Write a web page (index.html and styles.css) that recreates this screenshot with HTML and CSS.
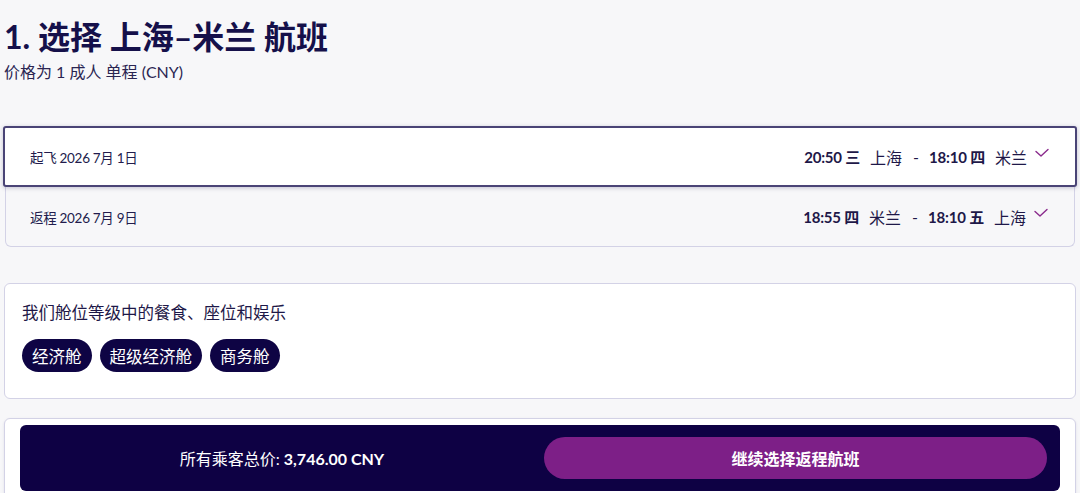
FILE: index.html
```html
<!DOCTYPE html>
<html lang="zh-CN">
<head>
<meta charset="utf-8">
<title>选择航班</title>
<link rel="stylesheet" href="styles.css">
</head>
<body>
<main class="page">
  <h1 class="title">1. 选择 上海–米兰 航班</h1>
  <p class="subtitle">价格为 1 成人 单程 (CNY)</p>

  <section class="legs">
    <div class="leg leg-active">
      <span class="leg-date">起飞 2026 7月 1日</span>
      <span class="leg-route">
        <b>20:50 三</b><span class="city">上海</span><span class="dash">-</span><b>18:10 四</b><span class="city">米兰</span>
        <svg class="check" width="14" height="10" viewBox="0 0 14 10"><path d="M1 3.5 L6 8 L13 1.5" fill="none" stroke="#8a2a8c" stroke-width="1.4" stroke-linecap="round" stroke-linejoin="round"/></svg>
      </span>
    </div>
    <div class="leg leg-return">
      <span class="leg-date">返程 2026 7月 9日</span>
      <span class="leg-route">
        <b>18:55 四</b><span class="city">米兰</span><span class="dash">-</span><b>18:10 五</b><span class="city">上海</span>
        <svg class="check" width="14" height="10" viewBox="0 0 14 10"><path d="M1 3.5 L6 8 L13 1.5" fill="none" stroke="#8a2a8c" stroke-width="1.4" stroke-linecap="round" stroke-linejoin="round"/></svg>
      </span>
    </div>
  </section>

  <section class="card cabins">
    <p class="cabins-text">我们舱位等级中的餐食、座位和娱乐</p>
    <div class="pills">
      <span class="pill">经济舱</span>
      <span class="pill">超级经济舱</span>
      <span class="pill">商务舱</span>
    </div>
  </section>

  <section class="card summary">
    <div class="bar">
      <div class="total">所有乘客总价: <b>3,746.00 CNY</b></div>
      <button class="continue">继续选择返程航班</button>
    </div>
  </section>
</main>
</body>
</html>
```

FILE: styles.css
```css
* { box-sizing: border-box; }
html, body {
  margin: 0;
  background: #f7f7f9;
  font-family: Lato, "Noto Sans CJK SC", sans-serif;
  color: #1b1547;
}
.page {
  padding: 17px 4px 0;
  height: 493px;
  overflow: hidden;
}
.title {
  margin: 0;
  font-size: 32px;
  line-height: 40px;
  font-weight: 700;
  color: #15104a;
}
.subtitle {
  margin: 5px 0 0;
  font-size: 16px;
  line-height: 20px;
  color: #2a2552;
}
.legs {
  margin-top: 44px;
}
.leg {
  display: flex;
  align-items: center;
  justify-content: space-between;
  padding: 0 26px 0 25px;
}
.leg-active {
  height: 61px;
  margin: 0 -1px;
  background: #fff;
  border: 2px solid #4a4476;
  border-radius: 3px;
  box-shadow: 0 1px 4px rgba(40, 30, 90, 0.25);
  position: relative;
  z-index: 1;
}
.leg-return {
  height: 60px;
  margin: 0 1px;
  background: #f7f7f9;
  border: 1px solid #d3d2e6;
  border-top: none;
  border-radius: 0 0 6px 6px;
  padding-left: 24px;
}
.leg-date {
  font-size: 13.5px;
  letter-spacing: -0.3px;
  color: #221c4d;
}
.leg-route {
  display: flex;
  align-items: center;
  font-size: 16px;
  color: #1e1848;
}
.leg-route b {
  font-weight: 700;
  font-size: 15px;
  letter-spacing: -0.2px;
}
.city { margin-left: 10px; }
.dash { margin: 0 10px 0 11px; }
.check { margin-left: 8px; margin-top: -8px; }

.card {
  background: #fff;
  border: 1px solid #d3d2e6;
  border-radius: 6px;
}
.cabins {
  margin-top: 36px;
  height: 116px;
  padding: 17px 17px 0;
}
.cabins-text {
  margin: 0;
  font-size: 16.5px;
  line-height: 24px;
  color: #1e1848;
}
.pills {
  display: flex;
  gap: 8px;
  margin-top: 14px;
}
.pill {
  height: 33px;
  display: flex;
  align-items: center;
  padding: 0 10px;
  border-radius: 17px;
  background: #0e0444;
  color: #fff;
  font-size: 16.5px;
}
.summary {
  margin-top: 19px;
  padding: 6px 15px 8px;
  box-shadow: 0 1px 3px rgba(40, 30, 90, 0.1);
}
.bar {
  display: flex;
  align-items: center;
  height: 66px;
  background: #0e0144;
  border-radius: 6px;
  padding: 0 13px 0 0;
}
.total {
  flex: 1;
  text-align: center;
  color: #fff;
  font-size: 16px;
}
.total b { font-weight: 700; }
.continue {
  width: 503px;
  height: 42px;
  border: none;
  border-radius: 21px;
  background: #7d1f87;
  color: #fff;
  font-family: Lato, "Noto Sans CJK SC", sans-serif;
  font-size: 16px;
  font-weight: 700;
}
```
